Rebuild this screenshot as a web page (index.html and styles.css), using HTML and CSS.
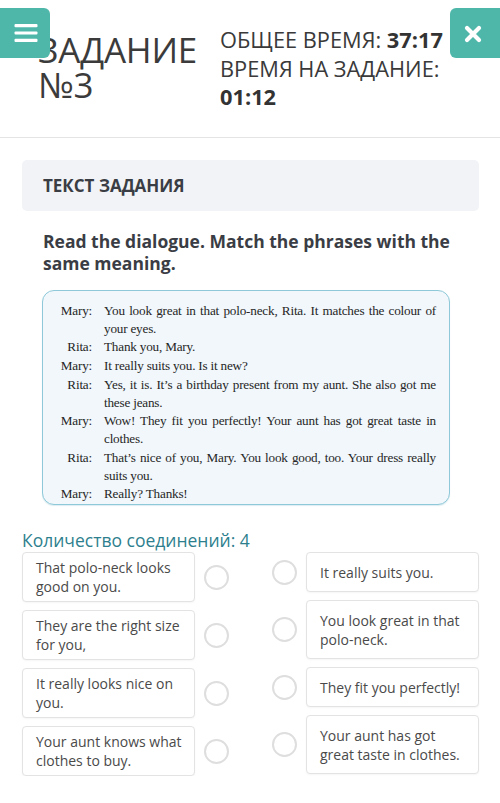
FILE: index.html
```html
<!DOCTYPE html>
<html lang="ru">
<head>
<meta charset="utf-8">
<title>Задание №3</title>
<link rel="stylesheet" href="styles.css">
</head>
<body>
<header class="top">
  <button class="menu-btn" aria-label="Меню">
    <svg width="24" height="20" viewBox="0 0 24 20"><rect x="0.5" y="1" width="23" height="3.2" rx="1"/><rect x="0.5" y="8.4" width="23" height="3.2" rx="1"/><rect x="0.5" y="15.8" width="23" height="3.2" rx="1"/></svg>
  </button>
  <h1 class="task-title">ЗАДАНИЕ №3</h1>
  <div class="timer">
    <div>ОБЩЕЕ ВРЕМЯ: <b>37:17</b></div>
    <div>ВРЕМЯ НА ЗАДАНИЕ:<br><b>01:12</b></div>
  </div>
  <button class="close-btn" aria-label="Закрыть">
    <svg width="18" height="18" viewBox="0 0 18 18"><path d="M3 3L15 15M15 3L3 15"/></svg>
  </button>
</header>

<main class="content">
  <div class="task-head">ТЕКСТ ЗАДАНИЯ</div>
  <p class="instruction">Read the dialogue. Match the phrases with the same meaning.</p>

  <div class="dialogue">
    <div class="who">Mary:</div>
    <div class="said"><span class="ln j">You look great in that polo-neck, Rita. It matches the colour of</span><span class="ln">your eyes.</span></div>
    <div class="who">Rita:</div>
    <div class="said"><span class="ln">Thank you, Mary.</span></div>
    <div class="who">Mary:</div>
    <div class="said"><span class="ln">It really suits you. Is it new?</span></div>
    <div class="who">Rita:</div>
    <div class="said"><span class="ln j">Yes, it is. It’s a birthday present from my aunt. She also got me</span><span class="ln">these jeans.</span></div>
    <div class="who">Mary:</div>
    <div class="said"><span class="ln j">Wow! They fit you perfectly! Your aunt has got great taste in</span><span class="ln">clothes.</span></div>
    <div class="who">Rita:</div>
    <div class="said"><span class="ln j">That’s nice of you, Mary. You look good, too. Your dress really</span><span class="ln">suits you.</span></div>
    <div class="who">Mary:</div>
    <div class="said"><span class="ln">Really? Thanks!</span></div>
  </div>

  <div class="count">Количество соединений: 4</div>

  <div class="match">
    <div class="col">
      <div class="item left"><div class="opt fixed">That polo-neck looks good on you.</div><span class="dot"></span></div>
      <div class="item left"><div class="opt fixed">They are the right size for you,</div><span class="dot"></span></div>
      <div class="item left"><div class="opt fixed">It really looks nice on you.</div><span class="dot"></span></div>
      <div class="item left"><div class="opt fixed">Your aunt knows what clothes to buy.</div><span class="dot"></span></div>
    </div>
    <div class="col">
      <div class="item right"><span class="dot"></span><div class="opt">It really suits you.</div></div>
      <div class="item right"><span class="dot"></span><div class="opt">You look great in that polo-neck.</div></div>
      <div class="item right"><span class="dot"></span><div class="opt">They fit you perfectly!</div></div>
      <div class="item right"><span class="dot"></span><div class="opt">Your aunt has got great taste in clothes.</div></div>
    </div>
  </div>
</main>
</body>
</html>
```

FILE: styles.css
```css
* { box-sizing: border-box; }
html, body { margin: 0; padding: 0; background: #fff; }
body {
  font-family: "Open Sans", "Noto Sans", sans-serif;
  color: #3a3a3a;
  width: 500px;
  overflow: hidden;
}

.top {
  position: relative;
  height: 138px;
  border-bottom: 1px solid #e4e4e4;
  display: grid;
  grid-template-columns: 182px 1fr;
  padding-left: 38px;
}
.task-title {
  margin: 0;
  padding-top: 32px;
  font-size: 35px;
  line-height: 35px;
  font-weight: 400;
  color: #3b3b3b;
  letter-spacing: -0.2px;
}
.timer {
  padding-top: 26px;
  font-size: 21.8px;
  line-height: 28.5px;
  color: #3a3a3a;
}
.timer b { font-weight: 700; color: #333; }

.menu-btn, .close-btn {
  position: absolute;
  top: 8px;
  width: 50px;
  height: 50px;
  border: 0;
  padding: 0;
  background: #4fb7aa;
  display: flex;
  align-items: center;
  justify-content: center;
  cursor: pointer;
}
.menu-btn { left: 0; border-radius: 0 6px 6px 0; }
.menu-btn svg { fill: #fff; margin-left: 2px; }
.close-btn { right: 0; border-radius: 6px 0 0 6px; padding-right: 5px; padding-top: 2px; }
.close-btn svg { stroke: #fff; stroke-width: 4.2; stroke-linecap: round; fill: none; }

.content { padding: 22px 21px 0 22px; }

.task-head {
  height: 51px;
  background: #f2f3f7;
  border-radius: 5px;
  padding-left: 21px;
  font-size: 17px;
  line-height: 51px;
  font-weight: 700;
  color: #3a3d44;
}
.instruction {
  margin: 19px 0 0;
  padding-left: 21px;
  font-size: 17.5px;
  line-height: 22px;
  font-weight: 700;
  color: #3a3d44;
}

.dialogue {
  margin: 16px 29px 0 20px;
  height: 215px;
  background: #f1f7fb;
  border: 1px solid #8fc9d9;
  border-radius: 12px;
  padding: 11px 13px 0 8px;
  display: grid;
  grid-template-columns: 41px 1fr;
  column-gap: 12px;
  font-family: "Liberation Serif", "DejaVu Serif", serif;
  font-size: 13.2px;
  line-height: 17.7px;
  letter-spacing: -0.2px;
  color: #262626;
  box-shadow: 0 1px 1px rgba(120, 180, 200, 0.25);
}
.who { text-align: right; }
.said { min-width: 0; }
.ln { display: block; white-space: nowrap; }
.ln.j { text-align: justify; text-align-last: justify; word-spacing: -0.8px; }

.count {
  margin-top: 23px;
  font-size: 17.5px;
  line-height: 24px;
  color: #2e7f8e;
}

.match {
  display: grid;
  grid-template-columns: 207px 207px;
  column-gap: 43px;
}
.col { display: flex; flex-direction: column; gap: 8px; }
.item { display: flex; align-items: center; gap: 9px; }
.opt {
  width: 173px;
  background: #fff;
  border: 1px solid #e3e3e3;
  border-radius: 4px;
  box-shadow: 0 1px 2px rgba(0, 0, 0, 0.04);
  padding: 10px 12px 9px 13px;
  font-size: 14px;
  line-height: 19px;
  color: #4a4a4a;
}
.opt.fixed {
  height: 50px;
  padding-top: 0;
  padding-bottom: 0;
  display: flex;
  align-items: center;
}
.dot {
  flex: none;
  width: 25px;
  height: 25px;
  border: 2px solid #dedede;
  border-radius: 50%;
  background: #fff;
}
```
